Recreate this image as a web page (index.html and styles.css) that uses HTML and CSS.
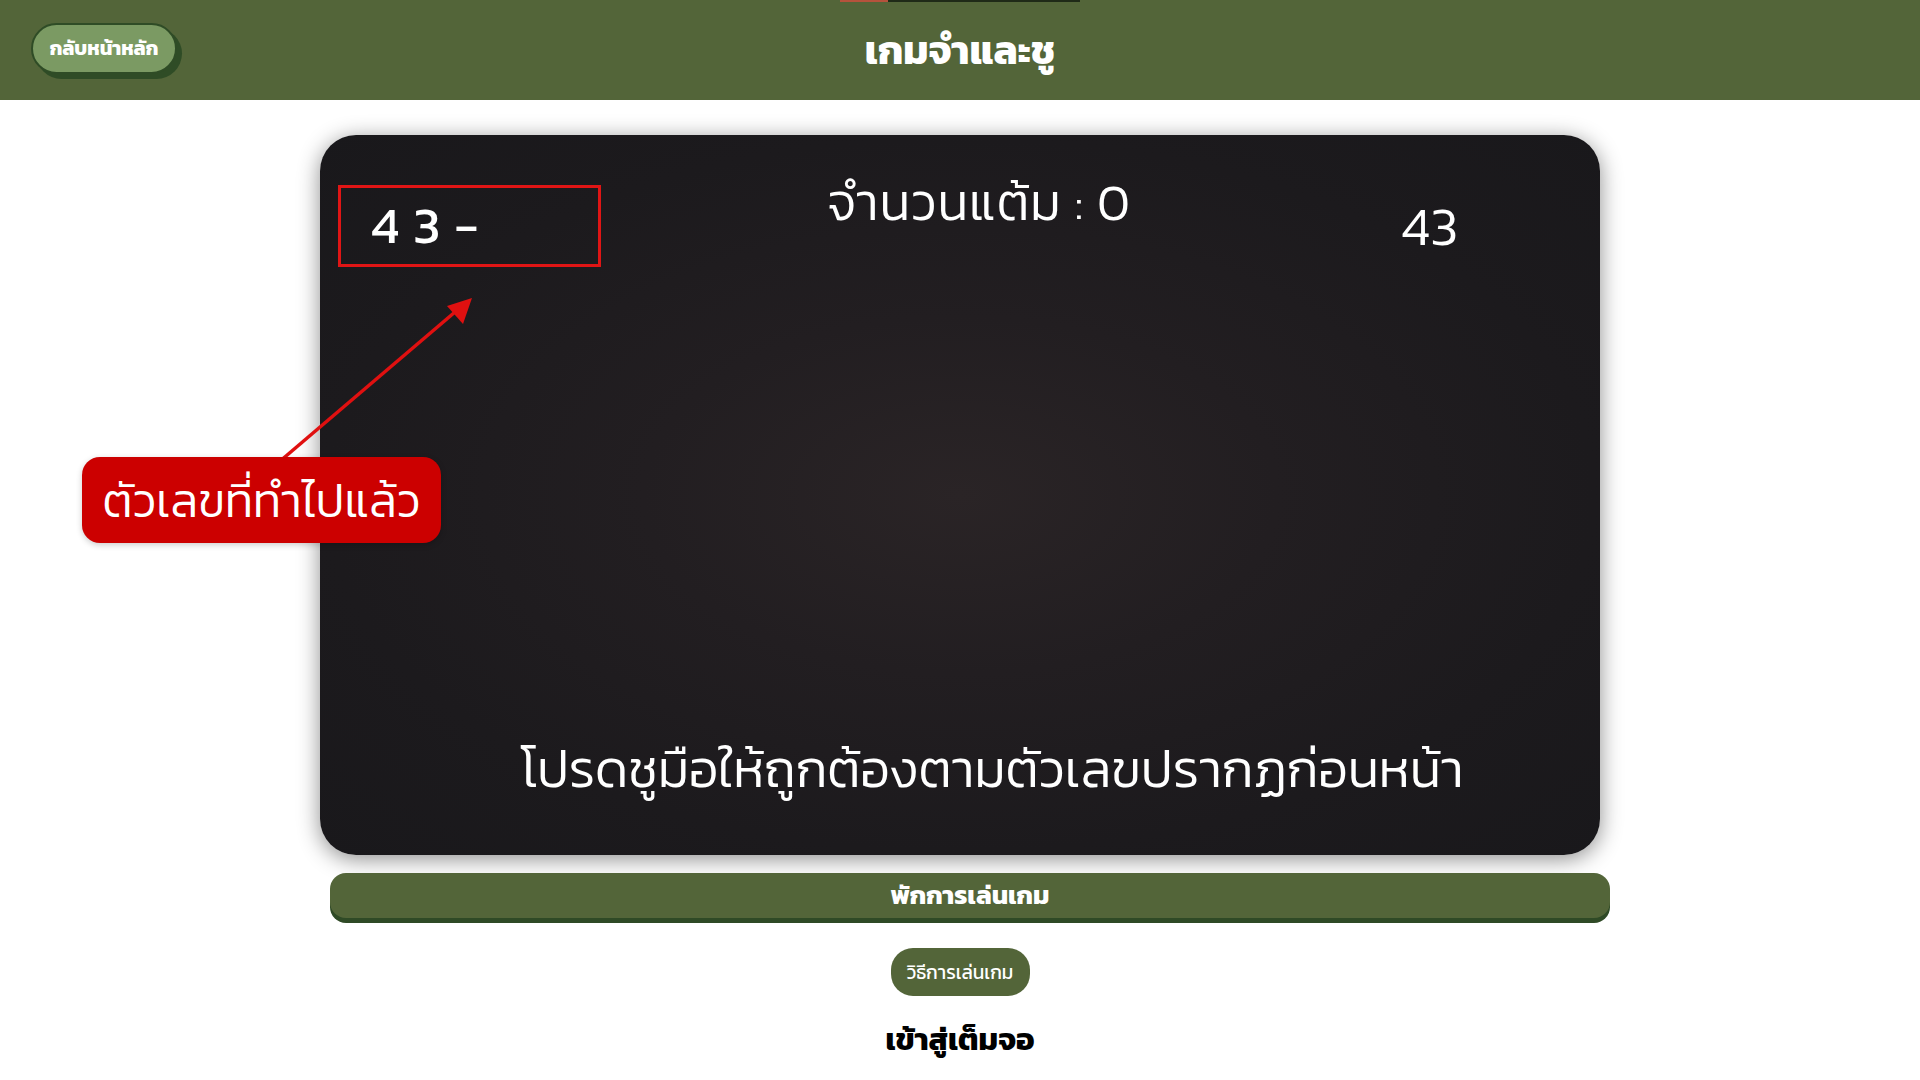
FILE: index.html
```html
<!DOCTYPE html>
<html lang="th">
<head>
<meta charset="utf-8">
<title>เกมจำและชู</title>
<link rel="stylesheet" href="styles.css">
</head>
<body>
<header class="topbar">
  <div class="progress"><div class="progress-fill" style="width:20%"></div></div>
  <div class="topbar-left"><button class="back-btn">กลับหน้าหลัก</button></div>
  <h1 class="title">เกมจำและชู</h1>
  <div class="topbar-right"></div>
</header>

<main class="main">
  <section class="card">
    <div class="card-top">
      <div class="history">4 3 -</div>
      <div class="score">จำนวนแต้ม : 0</div>
      <div class="current">43</div>
    </div>
    <p class="instruction">โปรดชูมือให้ถูกต้องตามตัวเลขปรากฏก่อนหน้า</p>
  </section>
  <button class="pause-btn">พักการเล่นเกม</button>
  <button class="howto-btn">วิธีการเล่นเกม</button>
  <div class="fullscreen">เข้าสู่เต็มจอ</div>
</main>

<svg class="arrow" width="200" height="170" viewBox="0 0 200 170">
  <line x1="2" y1="168" x2="178" y2="18" stroke="#e01010" stroke-width="3.5"/>
  <polygon points="195,4 170,12 186,30" fill="#e01010"/>
</svg>
<div class="callout">ตัวเลขที่ทำไปแล้ว</div>
</body>
</html>
```
FILE: styles.css
```css
* { box-sizing: border-box; }
html, body { margin: 0; padding: 0; }
body {
  background: #ffffff;
  font-family: "Kanit", "Noto Sans Thai", "Noto Sans Thai UI", "Loma", "Garuda", "Tlwg Typo", "Noto Sans", sans-serif;
  position: relative;
  min-height: 1080px;
}
.topbar {
  position: relative;
  height: 100px;
  background: #536539;
  display: grid;
  grid-template-columns: 1fr auto 1fr;
  align-items: center;
}
.progress {
  position: absolute;
  top: 0;
  left: 840px;
  width: 240px;
  height: 2px;
  background: #1f2a17;
}
.progress-fill { height: 100%; background: #b5523c; }
.topbar-left { padding-left: 31px; }
.back-btn {
  font-family: inherit;
  font-weight: 700;
  font-size: 20px;
  color: #ffffff;
  background: #7b9a63;
  border: 2px solid #2f4c26;
  border-radius: 26px;
  width: 146px;
  height: 51px;
  padding: 0;
  box-shadow: 5px 5px 0 #2f4c26;
  margin-top: -4px;
}
.title {
  margin: 0;
  color: #ffffff;
  font-size: 40px;
  font-weight: 700;
  line-height: 1;
}
.main {
  width: 1280px;
  margin: 35px auto 0;
  display: flex;
  flex-direction: column;
  align-items: center;
}
.card {
  width: 1280px;
  height: 720px;
  border-radius: 36px;
  background: radial-gradient(ellipse at 50% 50%, #2a2426 0%, #221e21 35%, #1c1a1d 70%, #19181b 100%);
  box-shadow: 0 4px 22px rgba(0, 0, 0, 0.45);
  color: #ffffff;
  display: flex;
  flex-direction: column;
  justify-content: space-between;
  padding: 50px 0 55px 18px;
}
.card-top {
  display: grid;
  grid-template-columns: 263px 1fr 263px;
  align-items: start;
}
.history {
  height: 82px;
  border: 3px solid #e01515;
  font-size: 52px;
  line-height: 74px;
  padding-left: 30px;
  letter-spacing: 1px;
}
.score {
  text-align: center;
  font-size: 51px;
  font-weight: 300;
  letter-spacing: 1px;
  line-height: 1;
  margin-top: -8px;
  padding-left: 20px;
}
.current {
  font-size: 54px;
  font-weight: 300;
  line-height: 1;
  margin-top: 14px;
  padding-left: 64px;
}
.instruction {
  margin: 0;
  text-align: center;
  font-size: 52px;
  font-weight: 300;
  line-height: 1.2;
  padding-left: 46px;
}
.pause-btn {
  font-family: inherit;
  align-self: flex-start;
  margin-top: 18px;
  margin-left: 10px;
  width: 1280px;
  flex-shrink: 0;
  height: 45px;
  background: #536539;
  color: #ffffff;
  border: none;
  border-radius: 16px;
  box-shadow: 0 5px 0 #2f4a26;
  font-size: 26px;
  font-weight: 700;
  padding: 0 0 2px;
}
.howto-btn {
  font-family: inherit;
  margin-top: 30px;
  width: 139px;
  height: 48px;
  background: #536539;
  color: #ffffff;
  border: none;
  border-radius: 22px;
  font-size: 19px;
  padding: 0;
}
.fullscreen {
  margin-top: 20px;
  font-size: 31px;
  font-weight: 700;
  color: #000000;
}
.arrow {
  position: absolute;
  left: 277px;
  top: 294px;
}
.callout {
  position: absolute;
  left: 82px;
  top: 457px;
  width: 359px;
  height: 86px;
  background: #cc0000;
  border-radius: 18px;
  color: #ffffff;
  font-size: 47px;
  font-weight: 300;
  display: flex;
  align-items: center;
  justify-content: center;
  box-shadow: 0 2px 6px rgba(0,0,0,0.2);
}
```
